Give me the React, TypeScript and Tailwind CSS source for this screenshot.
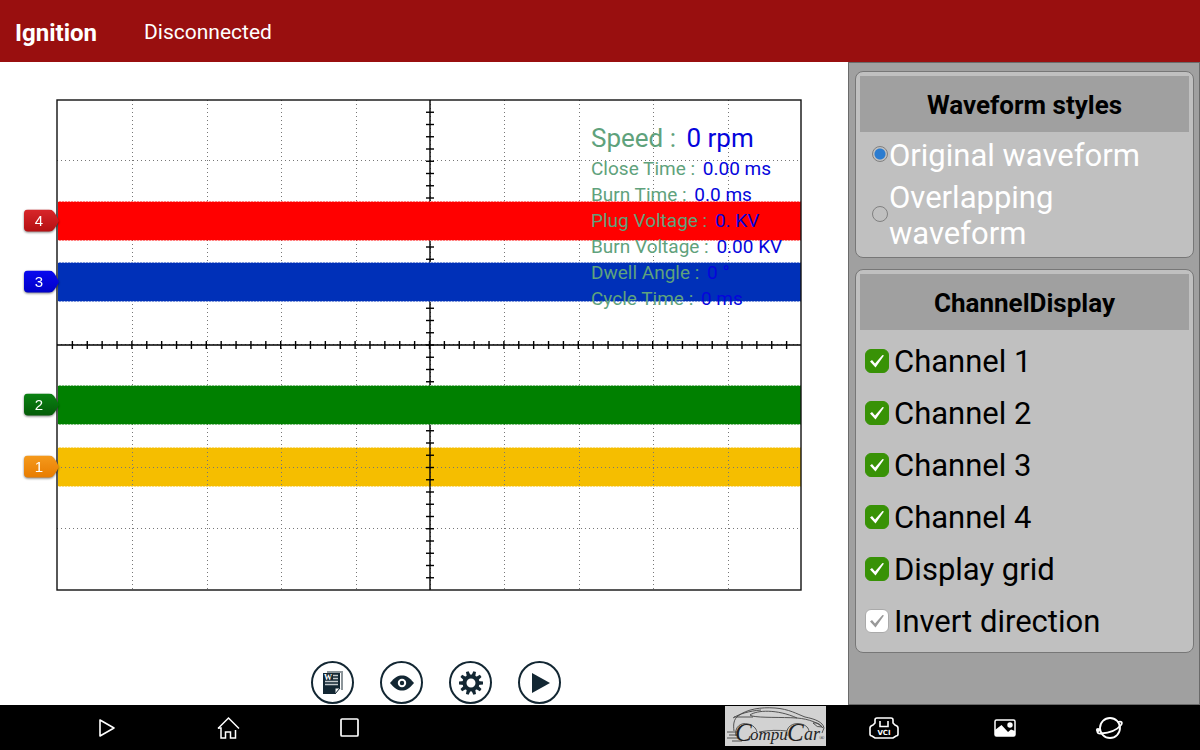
import React, { useState } from 'react';

const PLOT_W = 744;
const PLOT_H = 490;
const COLS = 10;
const ROWS = 8;
const BAND = 39;

const CHANNELS = [
  { id: 4, y: 121, band: '#ff0000', top: '#d8262a', bottom: '#b50f12' },
  { id: 3, y: 182, band: '#0030b8', top: '#0a0af0', bottom: '#0000c8' },
  { id: 2, y: 305, band: '#008000', top: '#0a8212', bottom: '#045c08' },
  { id: 1, y: 367, band: '#f5be00', top: '#f59a1c', bottom: '#e87c00' },
];

const READINGS = [
  { label: 'Close Time :', value: '0.00 ms' },
  { label: 'Burn Time :', value: '0.0 ms' },
  { label: 'Plug Voltage :', value: '0. KV' },
  { label: 'Burn Voltage :', value: '0.00 KV' },
  { label: 'Dwell Angle :', value: '0 °' },
  { label: 'Cycle Time :', value: '0 ms' },
];

const range = (n: number) => Array.from({ length: n }, (_, i) => i);

const Grid: React.FC = () => (
  <g stroke="#777" strokeWidth={1} strokeDasharray="1 3">
    {range(COLS - 1).map(i => {
      const x = Math.round(((i + 1) * PLOT_W) / COLS) + 1.5;
      return <line key={`c${i}`} x1={x} x2={x} y1={0} y2={PLOT_H} />;
    })}
    {range(ROWS - 1).map(i => {
      const y = Math.round(((i + 1) * PLOT_H) / ROWS) - 0.5;
      return <line key={`r${i}`} x1={0} x2={PLOT_W} y1={y} y2={y} />;
    })}
  </g>
);

const Axes: React.FC = () => (
  <g stroke="#000" strokeWidth={1.4}>
    <line x1={PLOT_W / 2 + 1} x2={PLOT_W / 2 + 1} y1={0} y2={PLOT_H} />
    <line x1={0} x2={PLOT_W} y1={PLOT_H / 2} y2={PLOT_H / 2} />
    {range(COLS * 5 - 1).map(i => {
      const x = ((i + 1) * PLOT_W) / (COLS * 5) + 0.5;
      return <line key={`x${i}`} x1={x} x2={x} y1={PLOT_H / 2 - 4} y2={PLOT_H / 2 + 4} />;
    })}
    {range(ROWS * 5 - 1).map(i => {
      const y = ((i + 1) * PLOT_H) / (ROWS * 5);
      return <line key={`y${i}`} x1={PLOT_W / 2 - 3} x2={PLOT_W / 2 + 5} y1={y} y2={y} />;
    })}
  </g>
);

const Band: React.FC<{ y: number; color: string }> = ({ y, color }) => (
  <g>
    <rect x={1} y={y - BAND / 2} width={PLOT_W - 1} height={BAND} fill={color} />
    <path
      d={`M1 ${y - BAND / 2}H${PLOT_W} M1 ${y + BAND / 2}H${PLOT_W}`}
      stroke="#fff"
      strokeOpacity={0.6}
      strokeDasharray="1 2"
    />
  </g>
);

interface ScopeProps {
  channels: Record<number, boolean>;
  showGrid: boolean;
}

const Scope: React.FC<ScopeProps> = ({ channels, showGrid }) => {
  const visible = CHANNELS.filter(c => channels[c.id]);
  return (
    <div className="relative">
      <svg viewBox={`0 0 ${PLOT_W} ${PLOT_H}`} className="block w-full overflow-visible">
        {visible.filter(c => c.id === 1).map(c => <Band key={c.id} y={c.y} color={c.band} />)}
        {showGrid && <Grid />}
        <Axes />
        {visible.filter(c => c.id !== 1).map(c => <Band key={c.id} y={c.y} color={c.band} />)}
        <rect x={0} y={0} width={PLOT_W} height={PLOT_H} fill="none" stroke="#111" strokeWidth={1.4} />
      </svg>

      {/* Channel markers */}
      {visible.map(c => (
        <div
          key={c.id}
          className="absolute -left-[33px] h-[23px] w-[35px] -translate-y-1/2 drop-shadow-[0_1px_1px_rgba(0,0,0,0.5)]"
          style={{ top: `${(c.y / PLOT_H) * 100}%` }}
        >
          <svg viewBox="0 0 35 23" className="block size-full">
            <defs>
              <linearGradient id={`tag${c.id}`} x1="0" y1="0" x2="0" y2="1">
                <stop offset="0" stopColor={c.top} />
                <stop offset="1" stopColor={c.bottom} />
              </linearGradient>
            </defs>
            <path d="M4 0H25C29 0 31 3 35 11.500C31 19 29 22 25 22H4Q0 22 0 18V4Q0 0 4 0Z" fill={`url(#tag${c.id})`} />
            <text x="15" y="16" textAnchor="middle" fontSize="15" fill="#fff" fontFamily="Liberation Sans, sans-serif">{c.id}</text>
          </svg>
        </div>
      ))}

      {/* Live readings */}
      <div className="absolute left-[534px] top-[21px] whitespace-pre text-[#5fa27c]">
        <div className="text-[26px] leading-[35px]">
          Speed : <span className="ml-1 text-[#0505dc]">0 rpm</span>
        </div>
        {READINGS.map(r => (
          <div key={r.label} className="text-[19px] leading-[26px]">
            {r.label} <span className="ml-[3px] text-[#0505dc]">{r.value}</span>
          </div>
        ))}
      </div>
    </div>
  );
};

const ReportIcon = () => (
  <svg viewBox="0 0 22 24" className="h-6 w-[22px]">
    <path d="M5 1H20V19" fill="none" stroke="#8c959a" strokeWidth="2" />
    <path d="M1 2H18V17L13 23H1Z" fill="#132733" />
    <path d="M13 23V17H18Z" fill="#fff" stroke="#132733" strokeWidth="1" />
    <path d="M11 4.500H16 M11 7.500H16 M3 10.500H16 M3 13.500H16" stroke="#c4cacd" strokeWidth="1.300" />
    <text x="2" y="9" fontSize="8" fontWeight="700" fill="#fff" fontFamily="Liberation Serif, serif">W</text>
  </svg>
);

const EyeIcon = () => (
  <svg viewBox="0 0 24 18" className="h-[18px] w-6">
    <path d="M0 9C5 3 8 1.500 12 1.500S19 3 24 9C19 15 16 16.500 12 16.500S5 15 0 9Z" fill="#132733" />
    <circle cx="12" cy="9" r="3.200" fill="#132733" stroke="#fff" strokeWidth="2" />
  </svg>
);

const GearIcon = () => (
  <svg viewBox="0 0 24 24" className="size-6">
    {range(10).map(i => (
      <path key={i} d="M10 5L10.600 0H13.400L14 5Z" fill="#132733" transform={`rotate(${i * 36 + 18} 12 12)`} />
    ))}
    <circle cx="12" cy="12" r="6.500" fill="none" stroke="#132733" strokeWidth="4" />
  </svg>
);

const PlayIcon = () => (
  <svg viewBox="0 0 20 22" className="h-[22px] w-5">
    <path d="M2 1L20 11L2 21Z" fill="#132733" />
  </svg>
);

const TOOLS = [
  { name: 'Report', Icon: ReportIcon },
  { name: 'View', Icon: EyeIcon },
  { name: 'Settings', Icon: GearIcon },
  { name: 'Start', Icon: PlayIcon },
];

const Panel: React.FC<{ title: string; children: React.ReactNode }> = ({ title, children }) => (
  <section className="rounded-lg border border-[#777] bg-[#c0c0c0] p-1">
    <h2 className="bg-[#a0a0a0] pt-0.5 text-center text-[26px] font-bold leading-[54px]">{title}</h2>
    {children}
  </section>
);

interface OptionProps {
  label: string;
  checked: boolean;
  onChange: () => void;
}

const RadioOption: React.FC<OptionProps> = ({ label, checked, onChange }) => (
  <label className="flex items-center gap-px pl-3 text-[31px] leading-9 text-white">
    <input
      type="radio"
      name="waveform"
      checked={checked}
      onChange={onChange}
      className="mb-1 size-4 shrink-0 appearance-none rounded-full border border-[#808080] checked:bg-[radial-gradient(circle,#2b7cd0_5px,transparent_6px)]"
    />
    {label}
  </label>
);

const CheckOption: React.FC<OptionProps> = ({ label, checked, onChange }) => (
  <label className="flex h-[52px] items-center gap-[5px] pl-[5px] text-[31px]">
    <span className="mb-0.5 grid size-6 shrink-0 *:[grid-area:1/1]">
      <input
        type="checkbox"
        checked={checked}
        onChange={onChange}
        className="peer size-6 appearance-none rounded-md border border-[#aaa] bg-white checked:border-[#389206] checked:bg-[#389206]"
      />
      <svg viewBox="0 0 24 24" className="pointer-events-none size-6 text-[#999] peer-checked:text-white">
        <path d="M5 12.500L7 11L10 14.500L17.500 6L19 6.500L10.500 18.500Z" fill="currentColor" />
      </svg>
    </span>
    {label}
  </label>
);

const CompuCarLogo = () => (
  <svg viewBox="0 0 101 40" className="mb-[3px] h-10 w-[101px] bg-[#d2d2d2]" fill="none" stroke="#444" strokeWidth="0.900">
    <path d="M9 25C8 18 9 13 13 10C22 3 36 1 50 2C64 3 72 8 80 11C90 13 98 16 99 22L97 27" />
    <path d="M9 11H28 M8 12C14 8 24 5 36 4" />
    <path d="M25 9C32 4 52 3 72 12C56 11 36 12 27 10Z" />
    <path d="M72 12C84 13 94 17 98 22 M34 26C44 24 54 24 62 25" />
    <path d="M88 17Q94 16 97 21Q92 22 88 17Z" />
    <path d="M11 30C9 21 16 16 23 18C28 19 31 22 32 26 M62 30C60 21 68 16 76 18C81 19 84 22 84 26" />
    <path d="M2 26H12 M4 29H12 M2 32H13 M7 35H17" />
    <g fill="#222" stroke="none" fontFamily="Liberation Serif, serif" fontStyle="italic">
      <text x="10" y="35" fontSize="25">C</text>
      <text x="25" y="34" fontSize="17">ompu</text>
      <text x="62" y="35" fontSize="25">C</text>
      <text x="79" y="34" fontSize="18">ar</text>
      <text x="94" y="34" fontSize="7">®</text>
    </g>
  </svg>
);

const NavBar: React.FC = () => (
  <nav className="flex h-[45px] shrink-0 items-center bg-black pl-[95px] pr-[77px] text-white">
    <div className="flex items-center gap-[97px]">
      <button aria-label="Back">
        <svg viewBox="0 0 24 24" className="block size-6" fill="none" stroke="currentColor" strokeWidth="1.600" strokeLinejoin="round">
          <path d="M5 4V20L19 12Z" />
        </svg>
      </button>
      <button aria-label="Home">
        <svg viewBox="0 0 24 24" className="block size-6" fill="none" stroke="currentColor" strokeWidth="1.500">
          <path d="M2 12.500L12.500 2L23 12.500" />
          <path d="M2 12H5V22H9.500V16H14.500V22H19.500V14" />
        </svg>
      </button>
      <button aria-label="Recent">
        <svg viewBox="0 0 24 24" className="block size-6" fill="none" stroke="currentColor" strokeWidth="1.700">
          <rect x="4" y="3" width="17" height="17" rx="1" />
        </svg>
      </button>
    </div>

    <div className="ml-auto flex items-center">
      <CompuCarLogo />
      <button aria-label="VCI" className="ml-[43px]">
        <svg viewBox="0 0 30 22" className="block h-[22px] w-[30px]" fill="none" stroke="currentColor" strokeWidth="1.600">
          <path d="M8 1H22Q24 1 24 3V6L26 8Q29 9 29 11V17Q29 19 27 19L24 21H6L3 19Q1 19 1 17V11Q1 9 4 8L6 6V3Q6 1 8 1Z" />
          <path d="M11 4V9.500H19V4" />
          <text x="15" y="17.500" textAnchor="middle" fontSize="7" fontWeight="700" fill="currentColor" stroke="none" fontFamily="DejaVu Sans, sans-serif">VCI</text>
        </svg>
      </button>
      <button aria-label="Gallery" className="ml-[95px]">
        <svg viewBox="0 0 22 18" className="block h-[18px] w-[22px]">
          <rect x="1" y="1" width="20" height="16" rx="1.500" fill="none" stroke="currentColor" strokeWidth="1.500" />
          <path d="M1 11L7.500 6L14 13L17 10.500L21 12V17H1Z" fill="currentColor" />
          <circle cx="16" cy="6" r="2.700" fill="currentColor" />
        </svg>
      </button>
      <button aria-label="Browser" className="ml-[79px]">
        <svg viewBox="0 0 28 24" className="block h-6 w-7" fill="none" stroke="currentColor" strokeWidth="1.800">
          <circle cx="15" cy="12" r="10" />
          <path d="M5 13C1 15 2 18 6 17.500C14 17 22 14 26 9C28 6 26 5 23 6" />
          <circle cx="3" cy="14" r="1.200" />
        </svg>
      </button>
    </div>
  </nav>
);

export default function App() {
  const [waveform, setWaveform] = useState('Original waveform');
  const [channels, setChannels] = useState<Record<number, boolean>>({ 1: true, 2: true, 3: true, 4: true });
  const [showGrid, setShowGrid] = useState(true);
  const [inverted, setInverted] = useState(false);

  return (
    <div className="flex min-h-screen flex-col bg-white font-[Roboto,sans-serif] text-black">
      <header className="flex h-[62px] shrink-0 items-center gap-[47px] bg-[#990f0f] px-[15px] pt-[3px] text-white">
        <h1 className="text-2xl font-bold">Ignition</h1>
        <span className="text-[21px]">Disconnected</span>
      </header>

      <div className="flex flex-1">
        <main className="flex flex-1 flex-col pl-[57px] pr-[47px] pt-[38px]">
          <Scope channels={channels} showGrid={showGrid} />
          <div className="mt-auto flex justify-center gap-[26px] pb-px pl-3.5 pt-4">
            {TOOLS.map(({ name, Icon }) => (
              <button
                key={name}
                aria-label={name}
                className="flex size-[43px] items-center justify-center rounded-full border-2 border-[#132733]"
              >
                <Icon />
              </button>
            ))}
          </div>
        </main>

        <aside className="w-[352px] shrink-0 space-y-[11px] border border-[#6a6a6a] bg-[#a0a0a0] pb-4 pl-1.5 pr-[5px] pt-2">
          <Panel title="Waveform styles">
            <div className="space-y-1.5 pb-px pt-1.5">
              {['Original waveform', 'Overlapping waveform'].map(w => (
                <RadioOption key={w} label={w} checked={waveform === w} onChange={() => setWaveform(w)} />
              ))}
            </div>
          </Panel>
          <Panel title="ChannelDisplay">
            <div className="pt-1.5">
              {[1, 2, 3, 4].map(id => (
                <CheckOption
                  key={id}
                  label={`Channel ${id}`}
                  checked={channels[id]}
                  onChange={() => setChannels({ ...channels, [id]: !channels[id] })}
                />
              ))}
              <CheckOption label="Display grid" checked={showGrid} onChange={() => setShowGrid(!showGrid)} />
              <CheckOption label="Invert direction" checked={inverted} onChange={() => setInverted(!inverted)} />
            </div>
          </Panel>
        </aside>
      </div>

      <NavBar />
    </div>
  );
}
